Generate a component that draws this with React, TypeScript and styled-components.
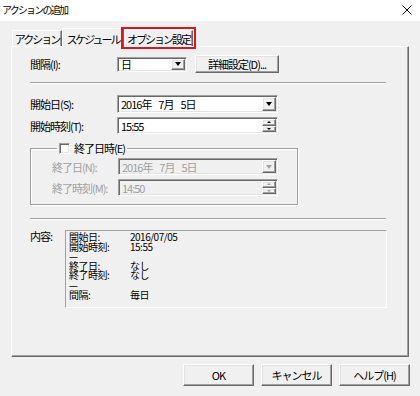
import React from "react";
import styled, { createGlobalStyle, css } from "styled-components";

const Global = createGlobalStyle`
  html, body { margin: 0; padding: 0; background: #f0f0f0; }
  body { font-family: "Noto Sans CJK JP", "DejaVu Sans", sans-serif; font-size: 11px; letter-spacing: -1px; color: #000; }
  * { box-sizing: border-box; }
`;

const sunken = css`
  border: 1px solid;
  border-color: #a0a0a0 #ffffff #ffffff #a0a0a0;
  box-shadow: inset 1px 1px 0 #696969, inset -1px -1px 0 #e3e3e3;
`;

const raised = css`
  border: 1px solid;
  border-color: #ffffff #696969 #696969 #ffffff;
  box-shadow: inset -1px -1px 0 #a0a0a0, inset 1px 1px 0 #e3e3e3;
  background: #f0f0f0;
`;

const Window = styled.div`
  width: 420px;
  height: 396px;
  display: flex;
  flex-direction: column;
  background: #f0f0f0;
  overflow: hidden;
`;

const TitleBar = styled.div`
  height: 21px;
  background: #ffffff;
  display: flex;
  align-items: center;
  justify-content: space-between;
  padding: 0 8px 1px 2px;
  font-size: 10px;
  letter-spacing: -1.8px;
  line-height: 12px;
`;

const Body = styled.div`
  padding: 0 11px;
  display: flex;
  flex-direction: column;
`;

const TabStrip = styled.div`
  height: 25px;
  display: flex;
  align-items: flex-end;
  padding-left: 1px;
  position: relative;
  z-index: 1;
`;

const Tab = styled.div<{ $active?: boolean; $w: number; $mark?: boolean }>`
  width: ${(p) => p.$w}px;
  height: ${(p) => (p.$active ? 19 : 16)}px;
  margin-bottom: ${(p) => (p.$active ? -1 : 0)}px;
  border-top: 1px solid #ffffff;
  border-left: 1px solid #ffffff;
  border-right: 1px solid #696969;
  box-shadow: inset -1px 0 0 #a0a0a0;
  background: #f0f0f0;
  display: flex;
  align-items: center;
  justify-content: center;
  font-size: 11px;
  letter-spacing: -2px;
  line-height: 12px;
  white-space: nowrap;
  padding-top: ${(p) => (p.$active ? 1 : 0)}px;
  ${(p) =>
    p.$mark &&
    css`
      outline: 2px solid #e0141c;
      outline-offset: 1px;
    `}
`;

const Panel = styled.div`
  width: 398px;
  height: 311px;
  border: 1px solid;
  border-color: #ffffff #696969 #696969 #ffffff;
  box-shadow: inset -1px -1px 0 #a0a0a0;
  padding: 7px 0 0 18px;
  display: flex;
  flex-direction: column;
`;

const Row = styled.div<{ $col: number; $top?: number }>`
  display: grid;
  grid-template-columns: ${(p) => p.$col}px auto auto;
  justify-content: start;
  align-items: center;
  margin-top: ${(p) => p.$top ?? 0}px;
`;

const Label = styled.span<{ $disabled?: boolean }>`
  font-size: 11px;
  line-height: 12px;
  white-space: nowrap;
  color: ${(p) => (p.$disabled ? "#a0a0a0" : "#000")};
`;

const Field = styled.div<{ $w: number; $h: number; $disabled?: boolean }>`
  ${sunken};
  width: ${(p) => p.$w}px;
  height: ${(p) => p.$h}px;
  background: ${(p) => (p.$disabled ? "#f0f0f0" : "#ffffff")};
  color: ${(p) => (p.$disabled ? "#a0a0a0" : "#000")};
  display: flex;
  align-items: center;
  justify-content: space-between;
  padding: 1px 1px 1px 3px;
  font-size: 11px;
  line-height: 12px;
  word-spacing: 2px;
  white-space: pre;
`;

const DropBtn = styled.div<{ $disabled?: boolean }>`
  ${raised};
  width: 14px;
  height: 100%;
  display: flex;
  align-items: center;
  justify-content: center;
  &::after {
    content: "";
    border-left: 3px solid transparent;
    border-right: 3px solid transparent;
    border-top: 4px solid ${(p) => (p.$disabled ? "#a0a0a0" : "#000")};
  }
`;

const Spin = styled.div`
  height: 100%;
  width: 14px;
  display: flex;
  flex-direction: column;
`;

const SpinBtn = styled.div<{ $up?: boolean; $disabled?: boolean }>`
  ${raised};
  flex: 1;
  display: flex;
  align-items: center;
  justify-content: center;
  &::after {
    content: "";
    border-left: 2px solid transparent;
    border-right: 2px solid transparent;
    ${(p) =>
      p.$up
        ? `border-bottom: 2px solid ${p.$disabled ? "#a0a0a0" : "#000"};`
        : `border-top: 2px solid ${p.$disabled ? "#a0a0a0" : "#000"};`}
  }
`;

const PushButton = styled.button<{ $w: number; $h: number; $ml?: number }>`
  ${raised};
  width: ${(p) => p.$w}px;
  height: ${(p) => p.$h}px;
  margin-left: ${(p) => p.$ml ?? 0}px;
  font-family: inherit;
  font-size: 11px;
  letter-spacing: -1px;
  line-height: 12px;
  color: #000;
  padding: 0;
  display: flex;
  align-items: center;
  justify-content: center;
`;

const Separator = styled.div<{ $top: number }>`
  width: 356px;
  height: 2px;
  margin-top: ${(p) => p.$top}px;
  border-top: 1px solid #a0a0a0;
  border-bottom: 1px solid #ffffff;
`;

const Group = styled.fieldset`
  width: 268px;
  margin: 8px 0 0 0;
  padding: 2px 0 8px 21px;
  border: 1px solid #a0a0a0;
  box-shadow: 1px 1px 0 #ffffff, inset 1px 1px 0 #ffffff;
  min-width: 0;
`;

const Legend = styled.legend`
  display: flex;
  align-items: center;
  gap: 4px;
  margin-left: 5px;
  padding: 0 2px;
  font-size: 11px;
  line-height: 12px;
`;

const CheckBox = styled.span`
  width: 11px;
  height: 11px;
  background: #ffffff;
  border: 1px solid;
  border-color: #a0a0a0 #ffffff #ffffff #a0a0a0;
  box-shadow: inset 1px 1px 0 #696969, inset -1px -1px 0 #e3e3e3;
`;

const ContentRow = styled.div`
  display: grid;
  grid-template-columns: 35px auto;
  align-items: start;
  margin-top: 10px;
`;

const ContentBox = styled.div`
  width: 322px;
  height: 78px;
  border: 1px solid;
  border-color: #a0a0a0 #ffffff #ffffff #a0a0a0;
  padding: 1px 0 0 3px;
  display: grid;
  grid-template-columns: 61px auto;
  grid-auto-rows: 9.6px;
  justify-content: start;
  font-size: 10px;
  letter-spacing: -0.5px;
  line-height: 9.6px;
`;

const Cell = styled.span`
  white-space: nowrap;
`;

const ButtonRow = styled.div`
  margin-top: 7px;
  display: flex;
  justify-content: flex-end;
  gap: 7px;
  margin-right: -1px;
`;

const CloseIcon = () => (
  <svg width="10" height="10" viewBox="0 0 10 10">
    <path d="M0.5 0.5 L9.5 9.5 M9.5 0.5 L0.5 9.5" stroke="#000" strokeWidth="1" />
  </svg>
);

const contentLines: [string, string][] = [
  ["開始日:", "2016/07/05"],
  ["開始時刻:", "15:55"],
  ["—", ""],
  ["終了日:", "なし"],
  ["終了時刻:", "なし"],
  ["—", ""],
  ["間隔:", "毎日"],
];

export default function App() {
  return (
    <>
      <Global />
      <Window>
        <TitleBar>
          <span>アクションの追加</span>
          <CloseIcon />
        </TitleBar>
        <Body>
          <TabStrip>
            <Tab $w={50}>アクション</Tab>
            <Tab $w={62} $active>
              スケジュール
            </Tab>
            <Tab $w={69} $mark>
              オプション設定
            </Tab>
          </TabStrip>
          <Panel>
            <Row $col={87} $top={1}>
              <Label>間隔(I):</Label>
              <Field $w={70} $h={15}>
                <span>日</span>
                <DropBtn />
              </Field>
              <PushButton $w={84} $h={18} $ml={8}>
                詳細設定(D)...
              </PushButton>
            </Row>
            <Separator $top={9} />
            <Row $col={87} $top={11}>
              <Label>開始日(S):</Label>
              <Field $w={161} $h={18}>
                <span>2016年  7月  5日</span>
                <DropBtn />
              </Field>
            </Row>
            <Row $col={87} $top={4}>
              <Label>開始時刻(T):</Label>
              <Field $w={161} $h={17}>
                <span>15:55</span>
                <Spin>
                  <SpinBtn $up />
                  <SpinBtn />
                </Spin>
              </Field>
            </Row>
            <Group>
              <Legend>
                <CheckBox />
                <span>終了日時(E)</span>
              </Legend>
              <Row $col={66} $top={2}>
                <Label $disabled>終了日(N):</Label>
                <Field $w={160} $h={17} $disabled>
                  <span>2016年  7月  5日</span>
                  <DropBtn $disabled />
                </Field>
              </Row>
              <Row $col={66} $top={4}>
                <Label $disabled>終了時刻(M):</Label>
                <Field $w={160} $h={17} $disabled>
                  <span>14:50</span>
                  <Spin>
                    <SpinBtn $up $disabled />
                    <SpinBtn $disabled />
                  </Spin>
                </Field>
              </Row>
            </Group>
            <Separator $top={13} />
            <ContentRow>
              <Label>内容:</Label>
              <ContentBox>
                {contentLines.map(([a, b], i) => (
                  <React.Fragment key={i}>
                    <Cell>{a}</Cell>
                    <Cell>{b}</Cell>
                  </React.Fragment>
                ))}
              </ContentBox>
            </ContentRow>
          </Panel>
          <ButtonRow>
            <PushButton $w={71} $h={22}>
              OK
            </PushButton>
            <PushButton $w={71} $h={22}>
              キャンセル
            </PushButton>
            <PushButton $w={71} $h={22}>
              ヘルプ(H)
            </PushButton>
          </ButtonRow>
        </Body>
      </Window>
    </>
  );
}
